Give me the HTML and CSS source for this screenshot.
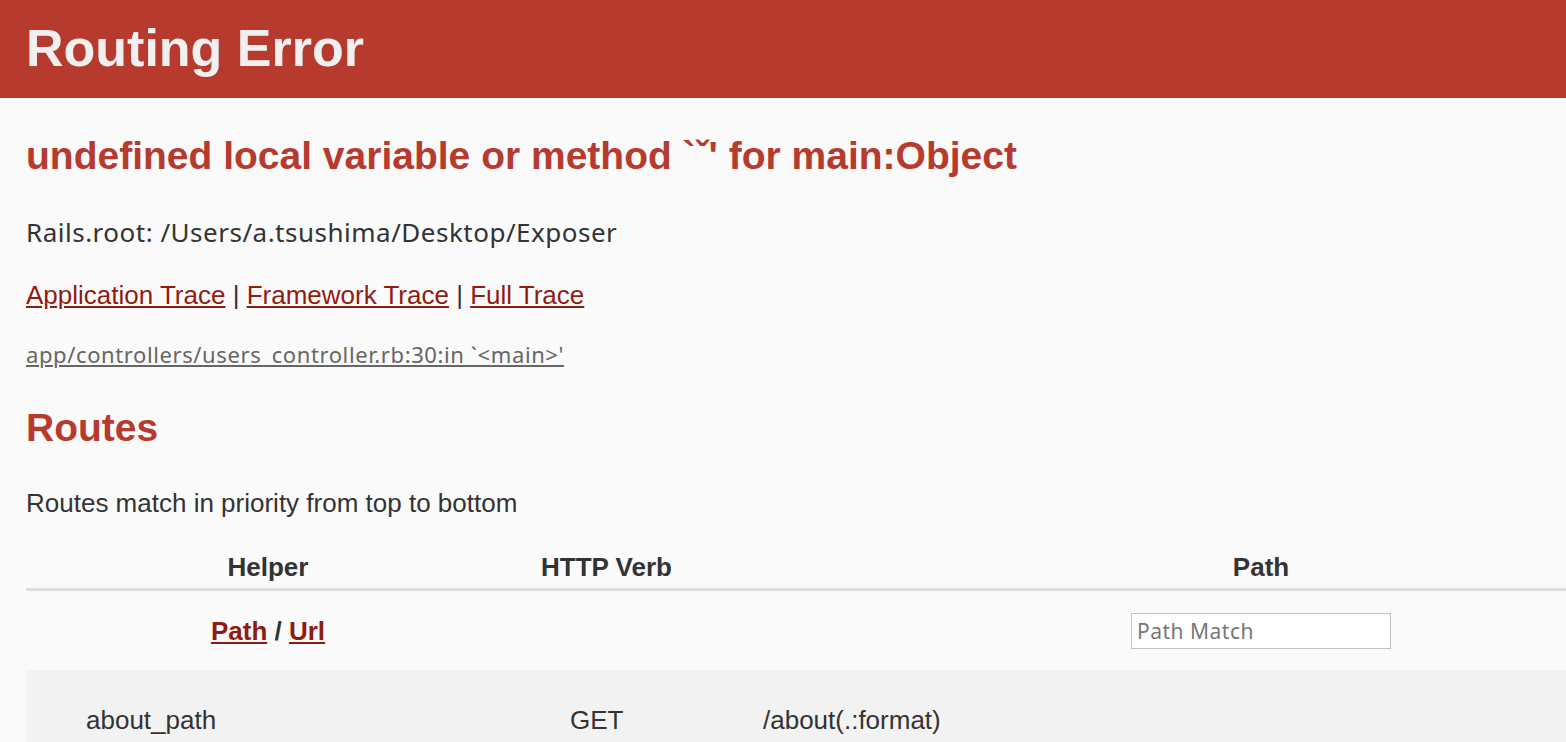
FILE: index.html
```html
<!DOCTYPE html>
<html lang="en">
<head>
<meta charset="utf-8">
<title>Routing Error</title>
<link rel="stylesheet" href="styles.css">
</head>
<body>
<header class="top">
  <h1 class="top-title">Routing Error</h1>
</header>
<div class="container">
  <h2 class="err-title">undefined local variable or method `ˇ' for main:Object</h2>
  <p class="root-line">Rails.root: /Users/a.tsushima/Desktop/Exposer</p>
  <p class="trace-links"><a href="#" class="red-link">Application Trace</a> | <a href="#" class="red-link">Framework Trace</a> | <a href="#" class="red-link">Full Trace</a></p>
  <p class="trace-frame"><a href="#" class="grey-link">app/controllers/users_controller.rb:30:in `&lt;main&gt;'</a></p>
  <h2 class="routes-title">Routes</h2>
  <p class="routes-note">Routes match in priority from top to bottom</p>
  <table class="route-table">
    <colgroup>
      <col class="c-helper">
      <col class="c-verb">
      <col class="c-path">
    </colgroup>
    <thead>
      <tr class="head-row">
        <th>Helper</th>
        <th>HTTP Verb</th>
        <th>Path</th>
      </tr>
      <tr class="search-row">
        <th><a href="#" class="red-link">Path</a> / <a href="#" class="red-link">Url</a></th>
        <th></th>
        <th><input class="path-search" type="search" placeholder="Path Match"></th>
      </tr>
    </thead>
    <tbody>
      <tr class="route-row">
        <td>about_path</td>
        <td>GET</td>
        <td>/about(.:format)</td>
      </tr>
    </tbody>
  </table>
</div>
</body>
</html>
```
FILE: styles.css
```css
html {
  overflow: hidden;
}
body {
  margin: 0;
  background: #FAFAFA;
  color: #333333;
  font-family: "Liberation Sans", Arial, Helvetica, sans-serif;
  font-size: 26px;
}
.top {
  background: #B63B2E;
  color: #F0F0F0;
  padding: 0 26px 2px;
}
.top-title {
  margin: 0;
  font-size: 52px;
  line-height: 96px;
  font-weight: bold;
}
.container {
  padding: 0 26px;
}
.err-title,
.routes-title {
  color: #B63B2E;
  font-size: 39px;
  line-height: 50px;
  font-weight: bold;
  margin: 0;
}
.err-title {
  margin-top: 33px;
}
.root-line {
  margin: 33px 0 0;
  line-height: 36px;
  font-family: "Noto Sans", "Liberation Sans", sans-serif;
  font-size: 26px;
  letter-spacing: 0.5px;
}
.trace-links {
  margin: 27px 0 0;
  line-height: 36px;
}
.trace-frame {
  margin: 26px 0 0;
  font-family: "Noto Sans", "Liberation Sans", sans-serif;
  font-size: 22px;
  line-height: 30px;
  letter-spacing: 0.6px;
}
.routes-title {
  margin-top: 34px;
}
.routes-note {
  margin: 32px 0 0;
  line-height: 36px;
}
.red-link {
  color: #921B11;
}
.grey-link {
  color: #666666;
}
.route-table {
  margin-top: 26px;
  border-collapse: separate;
  border-spacing: 0;
  table-layout: fixed;
  width: 1793px;
}
.c-helper { width: 484px; }
.c-verb { width: 193px; }
.c-path { width: 1116px; }
.route-table th {
  font-size: 26px;
  font-weight: bold;
  text-align: center;
  padding: 0;
}
.head-row th {
  line-height: 30px;
  padding: 5px 0 6px;
  border-bottom: 3px solid #DDDDDD;
}
.search-row th {
  height: 79px;
  vertical-align: middle;
  line-height: 30px;
}
.path-search {
  box-sizing: border-box;
  width: 260px;
  height: 36px;
  border: 1px solid #C3C3C3;
  background: #FFFFFF;
  font-family: "Noto Sans", "Liberation Sans", sans-serif;
  font-size: 21px;
  letter-spacing: 0.5px;
  padding: 0 5px;
  margin: 0;
  vertical-align: middle;
  border-radius: 0;
  -webkit-appearance: none;
  appearance: none;
}
.path-search::placeholder {
  color: #777777;
}
.route-row td {
  background: #F2F2F2;
  padding: 32px 60px 32px;
  line-height: 36px;
  vertical-align: top;
}
```
